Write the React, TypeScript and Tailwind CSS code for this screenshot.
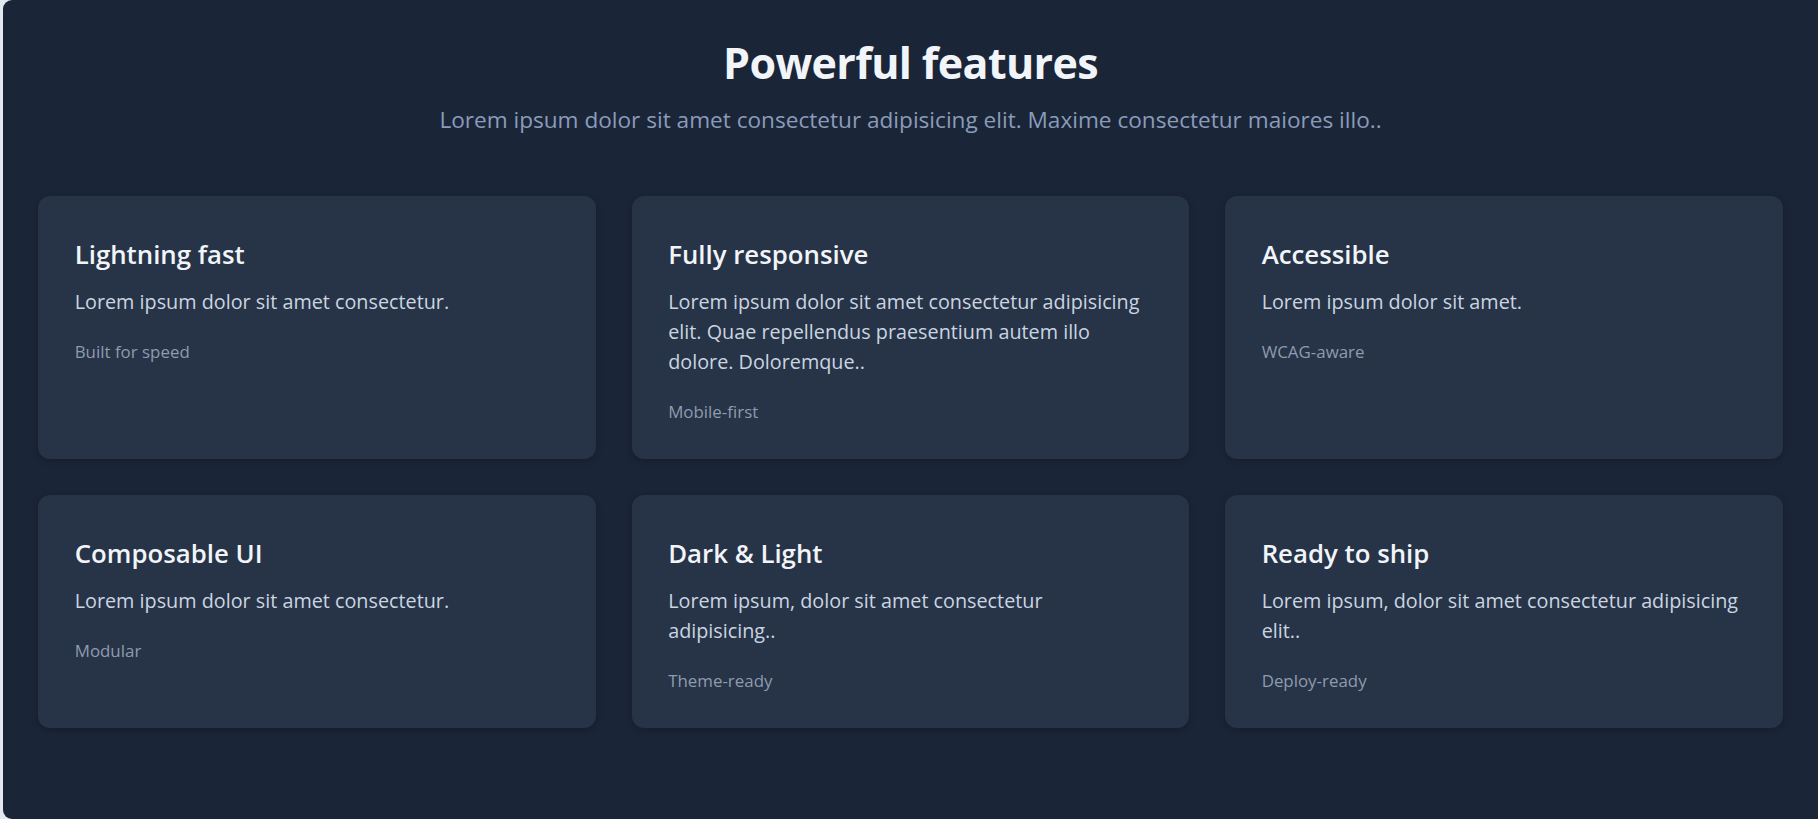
const features = [
  {
    title: "Lightning fast",
    text: "Lorem ipsum dolor sit amet consectetur.",
    tag: "Built for speed",
  },
  {
    title: "Fully responsive",
    text: "Lorem ipsum dolor sit amet consectetur adipisicing elit. Quae repellendus praesentium autem illo dolore. Doloremque..",
    tag: "Mobile-first",
  },
  {
    title: "Accessible",
    text: "Lorem ipsum dolor sit amet.",
    tag: "WCAG-aware",
  },
  {
    title: "Composable UI",
    text: "Lorem ipsum dolor sit amet consectetur.",
    tag: "Modular",
  },
  {
    title: "Dark & Light",
    text: "Lorem ipsum, dolor sit amet consectetur adipisicing..",
    tag: "Theme-ready",
  },
  {
    title: "Ready to ship",
    text: "Lorem ipsum, dolor sit amet consectetur adipisicing elit..",
    tag: "Deploy-ready",
  },
];

function FeatureCard({ title, text, tag }: { title: string; text: string; tag: string }) {
  return (
    <div className="rounded-xl bg-[#273346] pl-[36.5px] pr-[41px] pt-[41px] pb-[33.5px] shadow-[0_2px_6px_rgba(0,0,0,0.22)]">
      <h3 className="text-[25.8px] leading-[35px] font-semibold text-slate-100">{title}</h3>
      <p className="mt-[15.3px] text-[19.8px] leading-[30px] text-slate-300">{text}</p>
      <p className="mt-[22px] text-[16.9px] leading-[26.4px] text-[#8e9bb0]">{tag}</p>
    </div>
  );
}

export default function App() {
  return (
    <div className="min-h-screen bg-[#e2e8f0] pl-[3px] overflow-hidden font-['Open_Sans',sans-serif]">
      <section className="min-h-screen rounded-l-[9px] bg-[#1b2538] px-[35.2px] pt-[41px] pb-[60px]">
        {/* Heading */}
        <div className="text-center">
          <h2 className="text-[43px] leading-[44px] font-bold tracking-[-0.015em] text-slate-100">
            Powerful features
          </h2>
          <p className="mt-[19px] text-[22.6px] leading-[31px] text-[#8a9cba]">
            Lorem ipsum dolor sit amet consectetur adipisicing elit. Maxime consectetur maiores illo..
          </p>
        </div>

        {/* Cards */}
        <div className="mt-[61px] grid grid-cols-3 gap-[35.8px]">
          {features.map((f) => (
            <FeatureCard key={f.title} {...f} />
          ))}
        </div>
      </section>
    </div>
  );
}
